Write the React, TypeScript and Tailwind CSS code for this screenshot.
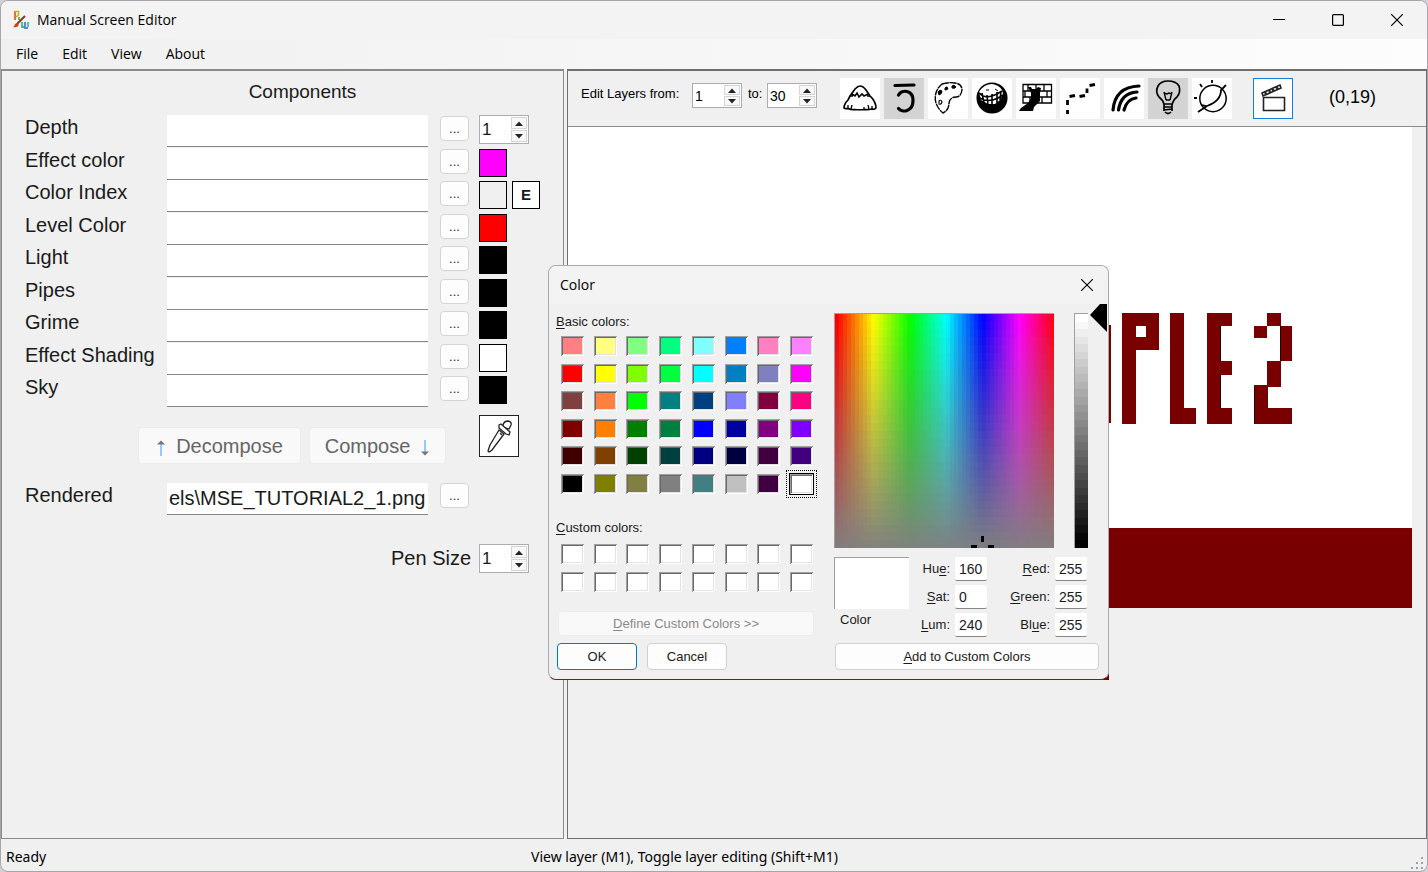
import { useState, type ReactNode } from "react";
import clsx from "clsx";

const SEGOE = "font-['Open_Sans','Noto_Sans',sans-serif]";
const NOTO = "font-['Noto_Sans','Open_Sans',sans-serif]";
const ARIAL = "font-['Liberation_Sans',Arial,sans-serif]";

const basicColors = [
  "bg-[#ff8080]", "bg-[#ffff80]", "bg-[#80ff80]", "bg-[#00ff80]", "bg-[#80ffff]", "bg-[#0080ff]", "bg-[#ff80c0]", "bg-[#ff80ff]",
  "bg-[#ff0000]", "bg-[#ffff00]", "bg-[#80ff00]", "bg-[#00ff40]", "bg-[#00ffff]", "bg-[#0080c0]", "bg-[#8080c0]", "bg-[#ff00ff]",
  "bg-[#804040]", "bg-[#ff8040]", "bg-[#00ff00]", "bg-[#008080]", "bg-[#004080]", "bg-[#8080ff]", "bg-[#800040]", "bg-[#ff0080]",
  "bg-[#800000]", "bg-[#ff8000]", "bg-[#008000]", "bg-[#008040]", "bg-[#0000ff]", "bg-[#0000a0]", "bg-[#800080]", "bg-[#8000ff]",
  "bg-[#400000]", "bg-[#804000]", "bg-[#004000]", "bg-[#004040]", "bg-[#000080]", "bg-[#000040]", "bg-[#400040]", "bg-[#400080]",
  "bg-[#000000]", "bg-[#808000]", "bg-[#808040]", "bg-[#808080]", "bg-[#408080]", "bg-[#c0c0c0]", "bg-[#400040]", "bg-[#ffffff]",
];

const components = [
  { name: "Depth", swatch: "" },
  { name: "Effect color", swatch: "bg-[#ff00ff]" },
  { name: "Color Index", swatch: "bg-[#f0f0f0]" },
  { name: "Level Color", swatch: "bg-[#ff0000]" },
  { name: "Light", swatch: "bg-black" },
  { name: "Pipes", swatch: "bg-black" },
  { name: "Grime", swatch: "bg-black" },
  { name: "Effect Shading", swatch: "bg-white" },
  { name: "Sky", swatch: "bg-black" },
];

function Icon({ children }: { children: ReactNode }) {
  return (
    <svg viewBox="0 0 40 41" className="block h-[41px] w-10" fill="none" stroke="#000" strokeWidth="1.5" aria-hidden="true">
      {children}
    </svg>
  );
}

const tools = [
  {
    name: "Terrain", active: false,
    art: (
      <>
        <path d="M4 30Q4 26 8 22L10 18L15 11Q18 8 20 8Q23 8 26 12L30 18L32 20Q36 25 36 30Q34 32 32 31Q28 32 24 31.500Q20 32 15 31.500Q11 32 8 30.500Q5 31 4 30Z" strokeWidth="1.7" />
        <path d="M12 16L15 18L17 15L19 19L22 16L24 18L28 16M10 18H13M27 18H30" strokeWidth="1.6" />
        <path d="M12 27L11 31M8 27V30M28 27L29 31M24 29V31M32 28V31" strokeWidth="1.3" />
      </>
    ),
  },
  {
    name: "Color index", active: true,
    art: <path d="M11 7.5L30 7M14.5 17C18 11 29 12 29 22.500C29 34 18 35 14.5 30.500" strokeWidth="3.2" strokeLinecap="round" />,
  },
  {
    name: "Palette", active: false,
    art: (
      <>
        <path d="M14 6Q20 4 27 5Q34 6 34 12Q33 19 28 19Q22 19 21 25Q21 32 15 35Q10 31 8 25Q5 14 14 6Z" strokeWidth="1.4" strokeDasharray="7 0.6" />
        <path d="M10 14Q12 11 14 13Q14 16 11 17ZM17 10Q18 8 20 10Q20 12 17 12ZM24 8Q26 6 28 9Q27 11 24 10Z" fill="#000" strokeWidth="1" />
        <path d="M11 23Q13 21 14 24Q13 27 11 26Z" strokeWidth="1.1" />
      </>
    ),
  },
  {
    name: "Sphere", active: false,
    art: (
      <>
        <circle cx="20" cy="20" r="14.8" fill="#000" />
        <path d="M7 14Q12 6 20 6Q27 7 30 12L31 16L28 22L23 26L16 26L9 22Z" fill="#fff" stroke="none" />
        <path d="M7 15L11 18L15 19L20 18L25 16L30 13M8 20L12 22L16 22.500L21 22L26 20L31 17M10 15L12 25M15 17L16 27M20 16L20 27M25 14L25 25M29 13L28 22" strokeWidth="1.6" />
        <path d="M14 12H17M23 11L26 13" strokeWidth="1" />
      </>
    ),
  },
  {
    name: "Brick path", active: false,
    art: (
      <>
        <path d="M7 6.5H35.5V25H7ZM7 13H35M7 19H35M12 6V13M20 6V13M28 6V13M31 13V19M9 13V19M26 19V25M14 19V25" strokeWidth="1.3" />
        <path d="M12 9L15 9L16 11L20 11L22 9L25 10L24 15V23L18 29L17 33H3L5 30L12 25L15 20V15Z" fill="#000" stroke="none" />
      </>
    ),
  },
  {
    name: "Dashed trail", active: false,
    art: <path d="M7.500 22V27M7.500 32V36M9.500 18.500L15 17.500M19.500 18.500L25 17.500M27 10.500V15M29.500 7.500L35 6.500" strokeWidth="2.8" />,
  },
  {
    name: "Rainbow", active: false,
    art: <path d="M9 32Q11 9 35 8M14.500 32Q17 15 33 14M20 32Q23 21 32 20" strokeWidth="3.2" strokeLinecap="round" />,
  },
  {
    name: "Light", active: true,
    art: (
      <>
        <path d="M16 26Q15 22 11 19Q7 14 10 8Q13 3 20 3Q28 3 31 8Q33 14 29 19Q25 22 24 27M16 26H24M16 29H24M16 32L24 31M17 34Q20 37 23 34M16 26V33M24 26V33" strokeWidth="1.7" />
        <path d="M16 14L18 22M24 14L22 22M16 15L19 16L21 15L24 16M18 22H22" strokeWidth="1.4" />
      </>
    ),
  },
  {
    name: "Sky", active: false,
    art: (
      <>
        <circle cx="21" cy="20.5" r="13.2" />
        <path d="M20 2V5M8 6L10 9M2 20H5M34 7L29 12Q29 23 15 28L6 34M10 27L14 28" strokeWidth="1.8" />
      </>
    ),
  },
];

function Spin({ label, initial, compact }: { label: string; initial: number; compact?: boolean }) {
  const [value, setValue] = useState(initial);
  return (
    <span className={clsx("flex border border-[#abadb3] bg-white", compact ? "h-[25px] w-[50px]" : "h-[29px] w-[50px]")}>
      <input
        aria-label={label}
        value={value}
        onChange={(e) => setValue(Number(e.target.value) || 0)}
        className={clsx("min-w-0 flex-1 bg-transparent pl-0.5 outline-none", compact ? "text-sm" : "text-[17px] leading-6")}
      />
      <span className="flex w-[18px] shrink-0 flex-col gap-px p-px">
        <button type="button" aria-label={`Increase ${label}`} onClick={() => setValue(value + 1)} className="flex flex-1 items-center justify-center border border-[#d5d5d5] bg-[#f8f8f8]">
          <svg viewBox="0 0 8 5" className="h-[5px] w-2"><path d="M0 5L4 0.500L8 5Z" fill="#222" /></svg>
        </button>
        <button type="button" aria-label={`Decrease ${label}`} onClick={() => setValue(value - 1)} className="flex flex-1 items-center justify-center border border-[#d5d5d5] bg-[#f8f8f8]">
          <svg viewBox="0 0 8 5" className="h-[5px] w-2"><path d="M0 0H8L4 4.500Z" fill="#222" /></svg>
        </button>
      </span>
    </span>
  );
}

function Browse({ label }: { label: string }) {
  return (
    <button type="button" aria-label={`Browse ${label}`} className="h-[25px] w-[29px] shrink-0 rounded border border-[#d4d4d4] bg-[#fdfdfd] text-[13px] leading-6 text-[#402040]">
      ...
    </button>
  );
}

const fieldClass = "w-[261px] shrink-0 border-b border-[#868686] bg-white px-0.5 text-xl leading-7 outline-none";

function ComponentsPanel() {
  return (
    <section className="w-[563px] shrink-0 border border-t-2 border-[#8a8a8a] text-[#1a1a1a]">
      <h2 className="mt-[9px] pl-10 text-center text-[19px] leading-6">Components</h2>
      <div className="mt-[11px] grid h-[293px] grid-rows-9">
        {components.map((c, i) => (
          <div key={c.name} className="flex items-start pl-[23px]">
            <label htmlFor={`field-${i}`} className="w-[142px] shrink-0 text-xl leading-6">{c.name}</label>
            <input id={`field-${i}`} className={clsx(fieldClass, "h-8")} />
            <span className="mt-px ml-3 flex"><Browse label={c.name} /></span>
            <span className="ml-2.5 flex gap-[5px]">
              {i === 0 ? (
                <Spin label="Depth layer" initial={1} />
              ) : (
                <button type="button" aria-label={`${c.name} swatch`} className={clsx("mt-px h-7 w-7 border border-black", c.swatch)} />
              )}
              {i === 2 && <button type="button" className="mt-px h-7 w-7 border border-black bg-white text-[15px] leading-6 font-bold">E</button>}
            </span>
          </div>
        ))}
      </div>
      <div className="mt-[7px] flex items-start pl-[136px]">
        <button type="button" disabled className="mt-3 flex h-[37px] w-[163px] items-center justify-center gap-2.5 rounded border border-[#ececec] bg-[#f9f9f9] text-xl text-[#666]">
          <svg viewBox="0 0 10 18" className="mt-1 h-[18px] w-2.5" fill="none"><path d="M5 2V17" stroke="#8fc4f4" strokeWidth="1.8" /><path d="M1 5.500L5 1.500L9 5.500Z" fill="#777" /></svg>
          Decompose
        </button>
        <button type="button" disabled className="mt-3 ml-2 flex h-[37px] w-[137px] items-center justify-center gap-2.5 rounded border border-[#ececec] bg-[#f9f9f9] text-xl text-[#666]">
          Compose
          <svg viewBox="0 0 10 18" className="mt-1 h-[18px] w-2.5" fill="none"><path d="M5 1V16" stroke="#8fc4f4" strokeWidth="1.8" /><path d="M1 12.500L5 16.500L9 12.500Z" fill="#777" /></svg>
        </button>
        <button type="button" aria-label="Pick color" className="ml-[33px] border border-[#222] bg-white">
          <svg viewBox="0 0 38 40" className="block h-10 w-[38px]" fill="#fff" stroke="#222" strokeWidth="1.3">
            <path d="M19 14L10 29L8 35Q9 37 12 34L24 18Z" />
            <path d="M23 9Q24 5 28 5Q32 6 31 9L29 13L23 11Z" />
            <path d="M19 9L21 8L30 16L29 19L26 18L19 12Z" />
            <path d="M20 17L22 19" fill="none" />
          </svg>
        </button>
      </div>
      <div className="mt-[19px] flex items-start pl-[23px]">
        <label htmlFor="rendered" className="w-[142px] shrink-0 text-xl leading-6">Rendered</label>
        <input id="rendered" defaultValue="els\MSE_TUTORIAL2_1.png" className={clsx(fieldClass, "h-8")} />
        <span className="ml-3 flex"><Browse label="Rendered" /></span>
      </div>
      <div className="mt-[29px] flex pl-[389px]">
        <span className="w-[88px] text-xl leading-7 whitespace-nowrap">Pen Size</span>
        <Spin label="Pen Size" initial={1} />
      </div>
    </section>
  );
}

const tiles = [
  [541, 198, 2, 98],
  [554, 186, 14, 111], [567, 186, 24, 13], [578, 199, 13, 24], [567, 210, 24, 13],
  [602, 186, 14, 111], [615, 281, 13, 16],
  [639, 186, 13, 111], [651, 186, 13, 13], [651, 234, 13, 14], [651, 281, 13, 16],
  [699, 186, 14, 13], [686, 199, 13, 12], [712, 199, 12, 35], [699, 234, 14, 26], [686, 258, 14, 39], [699, 281, 25, 16],
  [0, 401, 844, 80],
];

function LayersPanel() {
  return (
    <section className="min-w-0 flex-1 border border-t-2 border-[#6e6e6e]">
      <div className="flex h-14 items-start border-b border-[#8a8a8a] pl-[13px] text-[13px]">
        <span className="mt-[15px] w-[111px] leading-4">Edit Layers from:</span>
        <span className="mt-3 flex"><Spin label="First layer" initial={1} compact /></span>
        <span className="mt-[15px] ml-1.5 w-[19px] leading-4">to:</span>
        <span className="mt-3 flex"><Spin label="Last layer" initial={30} compact /></span>
        <div className="mt-[7px] ml-[23px] flex gap-1">
          {tools.map((t) => (
            <button key={t.name} type="button" aria-label={t.name} aria-pressed={t.active} className={t.active ? "bg-[#d3d3d3]" : "bg-white"}>
              <Icon>{t.art}</Icon>
            </button>
          ))}
        </div>
        <button type="button" aria-label="Render" className="mt-[7px] ml-[21px] border border-[#0f80dd] bg-white">
          <svg viewBox="0 0 38 39" className="block h-[39px] w-[38px]" fill="none" stroke="#222" strokeWidth="1.6" aria-hidden="true">
            <path d="M9.500 18.500H30.500V31.500H9.500Z" />
            <path d="M8 14L26 6L27 9L9 17Z" />
            <path d="M11 13L12 15M15 11L16 13M18 10L20 12M22 8L24 10" strokeWidth="2.4" />
          </svg>
        </button>
        <output className="mt-3.5 ml-9 text-lg leading-6">(0,19)</output>
      </div>
      <div className="mr-3.5 bg-white">
        <svg viewBox="0 0 844 481" className="block w-full" role="img" aria-label="Rendered level" shapeRendering="crispEdges">
          {tiles.map(([x, y, w, h], i) => <rect key={i} x={x} y={y} width={w} height={h} fill="#780000" />)}
          <path d="M652 199V234M652 248V281M712 199V234M686 260V297" stroke="#260000" strokeWidth="1" />
          <path d="M0 406H844" stroke="#870000" strokeWidth="1" />
        </svg>
      </div>
    </section>
  );
}

const SUNKEN = "shadow-[inset_1px_1px_#a0a0a0,inset_-1px_-1px_#ffffff,inset_2px_2px_#696969,inset_-2px_-2px_#e3e3e3]";
const COLS = 55;
const ROWS = 30;
const shades = Array.from({ length: 31 }, (_, i) => Math.round(255 * (1 - i / 30)));

function Channel({ before, letter, after, value }: { before: string; letter: string; after: string; value: number }) {
  return (
    <label className="flex h-6 items-center justify-end gap-[5px]">
      <span>{before}<u className="underline-offset-2">{letter}</u>{after}</span>
      <input defaultValue={value} className="h-6 w-8 rounded-xs border-b border-[#868686] bg-white pl-1 text-sm outline-none" />
    </label>
  );
}

function ColorDialog() {
  const [selected, setSelected] = useState(47);
  return (
    <div role="dialog" aria-label="Color" className="absolute top-[265px] left-[548px] w-[561px]">
      <div className="absolute right-0 bottom-0 h-3 w-3 bg-[#700000]" />
      <div className={clsx("relative overflow-hidden rounded-lg border border-[#a9a9a9] border-b-[#702020] bg-[#f0f0f0] text-[13px] text-[#1a1a1a]", ARIAL)}>
        <header className={clsx("flex h-[38px] items-center justify-between bg-[#f3f3f3] pr-[15px] pl-[11px] text-sm text-black", SEGOE)}>
          Color
          <button type="button" aria-label="Close dialog">
            <svg viewBox="0 0 12 12" className="h-3 w-3" stroke="#000" strokeWidth="1.1"><path d="M0 0L12 12M12 0L0 12" /></svg>
          </button>
        </header>
        <div className="flex pb-[9px]">
          <div className="ml-[7px] w-[278px] pt-2.5">
            <div className="leading-4"><u className="underline-offset-2">B</u>asic colors:</div>
            <div className="mt-1.5 ml-[5px] grid h-[158px] w-[252px] grid-cols-[repeat(8,23px)] content-between justify-between">
              {basicColors.map((c, i) => (
                <button
                  key={i}
                  type="button"
                  aria-label={`Basic color ${i + 1}`}
                  onClick={() => setSelected(i)}
                  className={clsx("h-5", SUNKEN, c, i === selected && "relative outline-1 outline-black after:absolute after:-inset-1 after:border after:border-dotted after:border-black")}
                />
              ))}
            </div>
            <div className="mt-[26px] leading-4"><u className="underline-offset-2">C</u>ustom colors:</div>
            <div className="mt-2 ml-[5px] grid h-12 w-[252px] grid-cols-[repeat(8,23px)] content-between justify-between">
              {Array.from({ length: 16 }, (_, i) => (
                <button key={i} type="button" aria-label={`Custom color ${i + 1}`} className={clsx("h-5 bg-white", SUNKEN)} />
              ))}
            </div>
            <button type="button" disabled className="mt-[19px] ml-0.5 block h-[25px] w-[256px] rounded border border-[#ececec] bg-[#f9f9f9] text-[#8a8a8a]">
              <u className="underline-offset-2">D</u>efine Custom Colors &gt;&gt;
            </button>
            <div className="mt-[7px] ml-px flex gap-2.5">
              <button type="button" className="h-[27px] w-20 rounded border border-[#0078d4] bg-[#fdfdfd]">OK</button>
              <button type="button" className="h-[27px] w-20 rounded border border-[#d0d0d0] bg-[#fdfdfd]">Cancel</button>
            </div>
          </div>
          <div className="flex-1">
            <div className="flex">
              <div className="mt-[9px] border-t border-l border-[#a0a0a0]">
                <svg viewBox="0 0 219 234" className="block h-[234px] w-[219px]" shapeRendering="crispEdges" role="img" aria-label="Hue and saturation">
                  {Array.from({ length: COLS * ROWS }, (_, i) => {
                    const col = i % COLS;
                    const row = Math.floor(i / COLS);
                    return (
                      <rect
                        key={i}
                        x={(col * 219) / COLS}
                        y={(row * 234) / ROWS}
                        width={219 / COLS + 0.5}
                        height={234 / ROWS + 0.5}
                        fill={`hsl(${(col * 360) / COLS} ${100 - (row * 100) / ROWS}% 50%)`}
                      />
                    );
                  })}
                  <path d="M147 222V228M136 232.500H142M153 232.500H159" stroke="#000" strokeWidth="3" />
                </svg>
              </div>
              <div className="mt-[9px] ml-5 border-t border-l border-[#a0a0a0]">
                <svg viewBox="0 0 13 234" className="block h-[234px] w-[13px]" shapeRendering="crispEdges" role="img" aria-label="Luminosity">
                  {shades.map((s, i) => <rect key={i} y={(i * 234) / 31} width="13" height="8" fill={`rgb(${s},${s},${s})`} />)}
                </svg>
              </div>
              <svg viewBox="0 0 17 28" className="ml-0.5 h-7 w-[17px]" aria-hidden="true"><path d="M0 11L10 0H17V28Z" fill="#000" /></svg>
            </div>
            <div className="mt-[9px] flex">
              <div className="w-[75px]">
                <div className="h-[52px] border-t border-l border-[#a0a0a0] bg-white" />
                <div className="mt-[3px] pl-1.5 leading-4">Color</div>
              </div>
              <div className="flex w-[78px] flex-col gap-1">
                <Channel before="Hu" letter="e" after=":" value={160} />
                <Channel before="" letter="S" after="at:" value={0} />
                <Channel before="" letter="L" after="um:" value={240} />
              </div>
              <div className="flex w-[100px] flex-col gap-1">
                <Channel before="" letter="R" after="ed:" value={255} />
                <Channel before="" letter="G" after="reen:" value={255} />
                <Channel before="Bl" letter="u" after="e:" value={255} />
              </div>
            </div>
            <button type="button" className="mt-1.5 ml-px block h-[27px] w-[264px] rounded border border-[#d0d0d0] bg-[#fdfdfd]">
              <u className="underline-offset-2">A</u>dd to Custom Colors
            </button>
          </div>
        </div>
      </div>
    </div>
  );
}

function AppIcon() {
  return (
    <svg viewBox="0 0 18 20" className="h-5 w-[18px]" fill="none" aria-hidden="true">
      <path d="M3 10V1" stroke="#e8702a" strokeWidth="2" />
      <path d="M3 1.500H6.500V5L4 7" stroke="#c7b326" strokeWidth="1.6" />
      <path d="M7 7V10" stroke="#4fb52a" strokeWidth="1.8" />
      <path d="M13 6L5 14" stroke="#7a3a25" strokeWidth="2" />
      <path d="M1 17Q3 16 3 14L5 13L7 15Q5 18 1 17Z" fill="#d83a18" />
      <path d="M10 12V17H12" stroke="#35c45a" strokeWidth="1.8" />
      <path d="M13 12V17M12 18H16" stroke="#2f5fe0" strokeWidth="1.5" />
      <path d="M16 12V17" stroke="#3cc79a" strokeWidth="1.8" />
    </svg>
  );
}

export default function App() {
  return (
    <div className={clsx("relative min-h-screen bg-[#d5d0d8] text-black", ARIAL)}>
      <div className="flex min-h-screen flex-col overflow-hidden rounded-lg border border-[#a8a4aa] bg-[#f0f0f0]">
        <header className={clsx("flex h-[38px] items-center bg-[#f3f3f3] pr-6 pl-[11px] text-sm", SEGOE)}>
          <AppIcon />
          <h1 className="ml-[7px] flex-1">Manual Screen Editor</h1>
          <div className="flex items-center gap-[47px]">
            <button type="button" aria-label="Minimize"><svg viewBox="0 0 12 12" className="h-3 w-3" stroke="#000"><path d="M0 5.500H12" /></svg></button>
            <button type="button" aria-label="Maximize"><svg viewBox="0 0 12 12" className="h-3 w-3" fill="none" stroke="#000" strokeWidth="1.2"><rect x="0.600" y="0.600" width="10.800" height="10.800" rx="1" /></svg></button>
            <button type="button" aria-label="Close"><svg viewBox="0 0 12 12" className="h-3 w-3" stroke="#000" strokeWidth="1.2"><path d="M0 0L12 12M12 0L0 12" /></svg></button>
          </div>
        </header>
        <nav className={clsx("flex h-[30px] items-center gap-6 bg-linear-to-r from-[#f0f0f0] to-[#fdfdfd] pl-[15px] text-sm", SEGOE)}>
          {["File", "Edit", "View", "About"].map((m) => <button key={m} type="button">{m}</button>)}
        </nav>
        <main className="flex flex-1 gap-[3px]">
          <ComponentsPanel />
          <LayersPanel />
        </main>
        <footer className={clsx("flex h-8 items-center pl-[5px] text-sm", NOTO)}>
          <span className="w-[525px] pt-1">Ready</span>
          <span className="flex-1 pt-1">View layer (M1), Toggle layer editing (Shift+M1)</span>
          <svg viewBox="0 0 14 14" className="mr-0.5 h-3.5 w-3.5 self-end" fill="#a0a0a0" aria-hidden="true">
            <path d="M10 0h2v2h-2zM5 5h2v2h-2zM10 5h2v2h-2zM0 10h2v2h-2zM5 10h2v2h-2zM10 10h2v2h-2z" />
          </svg>
        </footer>
      </div>
      <ColorDialog />
    </div>
  );
}
